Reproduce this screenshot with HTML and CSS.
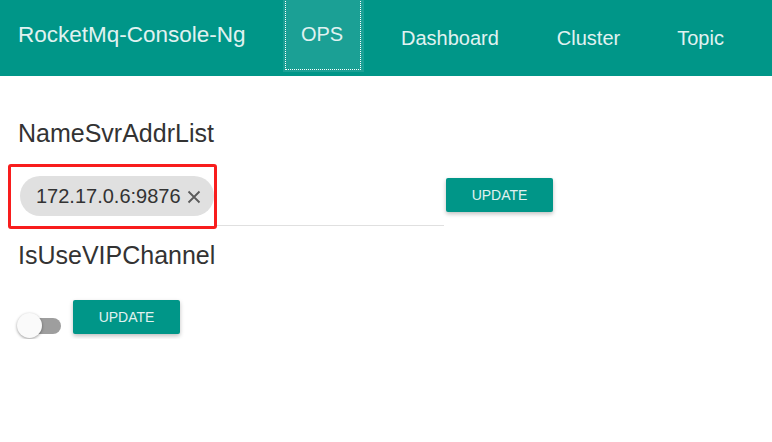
FILE: index.html
```html
<!DOCTYPE html>
<html>
<head>
<meta charset="utf-8">
<link rel="stylesheet" href="styles.css">
</head>
<body>
<header class="topbar">
  <div class="brand">RocketMq-Console-Ng</div>
  <nav class="nav">
    <a class="nav-item active">OPS</a>
    <a class="nav-item dash">Dashboard</a>
    <a class="nav-item cluster">Cluster</a>
    <a class="nav-item topic">Topic</a>
  </nav>
</header>
<main class="content">
  <h2 class="label">NameSvrAddrList</h2>
  <div class="row row-ns">
    <div class="chips-input">
      <div class="highlight">
        <span class="chip">172.17.0.6:9876<svg class="chip-x" width="14" height="14" viewBox="0 0 14 14"><path d="M1.5 1.5 L12.5 12.5 M12.5 1.5 L1.5 12.5" stroke="#5a5a5a" stroke-width="1.8" fill="none"/></svg></span>
      </div>
    </div>
    <button class="btn btn-ns">UPDATE</button>
  </div>
  <h2 class="label label-vip">IsUseVIPChannel</h2>
  <div class="row row-vip">
    <span class="toggle"><span class="track"></span><span class="thumb"></span></span>
    <button class="btn">UPDATE</button>
  </div>
</main>
</body>
</html>
```
FILE: styles.css
```css
* { box-sizing: border-box; }
body {
  margin: 0;
  font-family: "Liberation Sans", Arial, sans-serif;
  background: #fff;
  color: #333;
}
.topbar {
  height: 76px;
  background: #009688;
  display: flex;
  align-items: flex-start;
  color: #e0f2f1;
}
.brand {
  font-size: 22.5px;
  padding: 22px 0 0 18px;
  width: 283px;
  line-height: 26px;
  color: #e0f2f1;
  white-space: nowrap;
}
.nav { display: flex; height: 72px; }
.nav-item {
  font-size: 20px;
  color: #e0f2f1;
  line-height: 76px;
  height: 72px;
}
.nav-item.active {
  position: relative;
  display: block;
  width: 81px;
  padding: 0 5px 0 2px;
  background: #1ba095;
  line-height: 68px;
  text-align: center;
}
.nav-item.active::after {
  content: "";
  position: absolute;
  left: 2px; top: -2px; right: 3px; bottom: 2px;
  border: 1px dotted #fff;
}
.nav-item.dash { margin-left: 37px; }
.nav-item.cluster { margin-left: 58px; }
.nav-item.topic { margin-left: 57px; }

.label {
  margin: 0;
  font-weight: normal;
  font-size: 25px;
  color: #333;
  padding: 42px 0 0 18px;
  line-height: 30px;
}
.row-ns {
  display: flex;
  align-items: flex-start;
  margin-top: 16px;
  padding-left: 8px;
}
.chips-input {
  width: 436px;
  height: 62px;
  border-bottom: 1px solid #e0e0e0;
}
.highlight {
  width: 209px;
  height: 65px;
  border: 3px solid #f81d1d;
  border-radius: 3px;
  padding: 9px 0 0 9px;
  background: #fff;
}
.chip {
  display: inline-flex;
  align-items: center;
  height: 40px;
  padding: 0 13px 0 16px;
  border-radius: 20px;
  background: #e0e0e0;
  font-size: 20px;
  color: #333;
  white-space: nowrap;
}
.chip-x {
  margin-left: 6px;
  margin-top: 1px;
}
.btn {
  font-family: "Liberation Sans", Arial, sans-serif;
  background: #009688;
  color: #e0f2f1;
  border: none;
  border-radius: 2px;
  width: 107px;
  height: 34px;
  font-size: 14px;
  box-shadow: 0 2px 4px rgba(0,0,0,0.25);
  padding: 0;
}
.btn-ns { margin-top: 14px; margin-left: 2px; }
.label-vip { padding-top: 14px; }
.row-vip {
  display: flex;
  align-items: flex-start;
  margin-top: 30px;
  padding-left: 17px;
}
.toggle {
  position: relative;
  width: 44px;
  height: 26px;
  margin-top: 13px;
  margin-right: 12px;
}
.track {
  position: absolute;
  left: 6px; top: 5px;
  width: 38px; height: 16px;
  border-radius: 8px;
  background: #9e9e9e;
}
.thumb {
  position: absolute;
  left: 0; top: 0;
  width: 25px; height: 25px;
  border-radius: 50%;
  background: #fafafa;
  box-shadow: 0 1px 3px rgba(0,0,0,0.4);
}
```
